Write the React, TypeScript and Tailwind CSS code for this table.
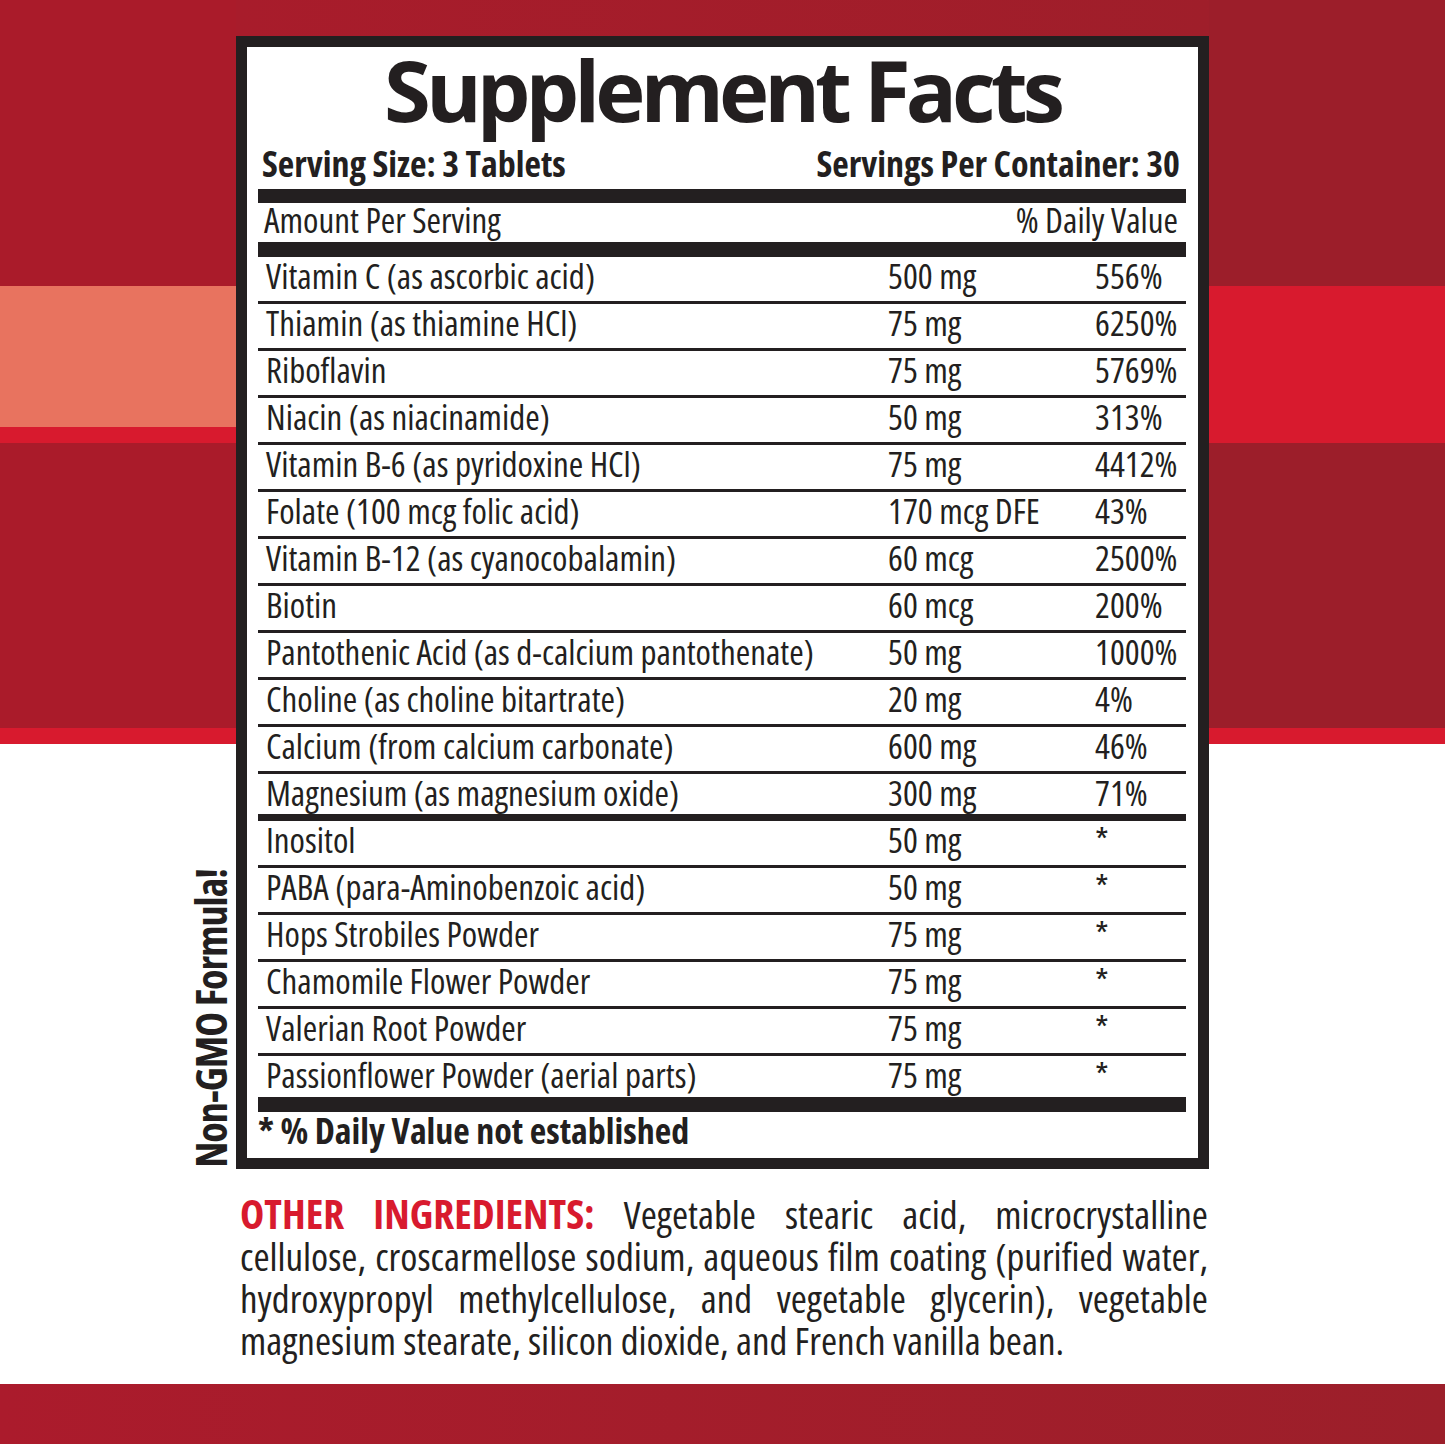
const ink = "text-[#231f20]";

const facts: [string, string, string][] = [
  ["Vitamin C (as ascorbic acid)", "500 mg", "556%"],
  ["Thiamin (as thiamine HCl)", "75 mg", "6250%"],
  ["Riboflavin", "75 mg", "5769%"],
  ["Niacin (as niacinamide)", "50 mg", "313%"],
  ["Vitamin B-6 (as pyridoxine HCl)", "75 mg", "4412%"],
  ["Folate (100 mcg folic acid)", "170 mcg DFE", "43%"],
  ["Vitamin B-12 (as cyanocobalamin)", "60 mcg", "2500%"],
  ["Biotin", "60 mcg", "200%"],
  ["Pantothenic Acid (as d-calcium pantothenate)", "50 mg", "1000%"],
  ["Choline (as choline bitartrate)", "20 mg", "4%"],
  ["Calcium (from calcium carbonate)", "600 mg", "46%"],
  ["Magnesium (as magnesium oxide)", "300 mg", "71%"],
  ["Inositol", "50 mg", "*"],
  ["PABA (para-Aminobenzoic acid)", "50 mg", "*"],
  ["Hops Strobiles Powder", "75 mg", "*"],
  ["Chamomile Flower Powder", "75 mg", "*"],
  ["Valerian Root Powder", "75 mg", "*"],
  ["Passionflower Powder (aerial parts)", "75 mg", "*"],
];

function FactRow({ row, index }: { row: [string, string, string]; index: number }) {
  const last = index === facts.length - 1;
  // the line under magnesium closes the daily-value block, so it is heavier
  const thick = index === 11;
  let rule = "pb-[7px] border-b-[3px]";
  if (thick) rule = "pb-[3px] border-b-[7px]";
  if (last) rule = "pb-[4px]";
  return (
    <div className={`grid grid-cols-[622px_207px_1fr] pl-[8px] leading-[37px] border-[#231f20] ${rule}`}>
      <span>{row[0]}</span>
      <span>{row[1]}</span>
      <span>{row[2]}</span>
    </div>
  );
}

function SideBands({ dark, light }: { dark: string; light: string }) {
  return (
    <div className="flex flex-col">
      <div className={`h-[286px] ${dark}`} />
      <div className={`h-[141px] ${light}`} />
      <div className="h-[16px] bg-[#d81a2e]" />
      <div className={`h-[285px] ${dark}`} />
      <div className="h-[16px] bg-[#d81a2e]" />
    </div>
  );
}

export default function App() {
  return (
    <div className={`w-[1445px] h-[1444px] flex flex-col bg-white font-['Open_Sans',sans-serif] ${ink}`}>
      <div className="flex h-[1384px]">
        {/* left strip */}
        <div className="w-[236px] flex flex-col">
          <SideBands dark="bg-[#aa1b2a]" light="bg-[#e8735f]" />
          <div className="flex-1 flex justify-end items-end pr-[4px] pb-[216px]">
            <div className="[writing-mode:vertical-rl] rotate-180 text-[42px] leading-[42px] tracking-[-1px] font-bold [font-stretch:condensed] whitespace-nowrap">
              Non-GMO Formula!
            </div>
          </div>
        </div>

        {/* label */}
        <div className="w-[973px] flex flex-col">
          <div className="h-[36px] bg-linear-to-r from-[#a81c2b] to-[#9f1e2a]" />
          <div className="border-[11px] border-[#231f20] bg-white pl-[11px] pr-[12px]">
            <h1 className="text-center text-[85px] leading-[85px] font-bold tracking-[-5px]">
              Supplement Facts
            </h1>
            <div className="mt-[20px] mb-[13px] flex justify-between pl-[4px] pr-[6px] text-[36px] leading-[24px] font-bold [font-stretch:condensed]">
              <span>Serving Size: 3 Tablets</span>
              <span>Servings Per Container: 30</span>
            </div>
            <div className="h-[14px] bg-[#231f20]" />
            <div className="flex justify-between pl-[6px] pr-[8px] pb-[6px] text-[35px] leading-[33px] [font-stretch:condensed]">
              <span>Amount Per Serving</span>
              <span>% Daily Value</span>
            </div>
            <div className="h-[15px] bg-[#231f20]" />
            <div className="text-[35px] [font-stretch:condensed]">
              {facts.map((row, i) => (
                <FactRow key={row[0]} row={row} index={i} />
              ))}
            </div>
            <div className="h-[15px] bg-[#231f20]" />
            <div className="pt-[4px] pb-[12px] text-[36px] leading-[30px] font-bold [font-stretch:condensed]">
              * % Daily Value not established
            </div>
          </div>

          <div className="mt-[23px] pl-[4px] pr-[1px] text-[39px] leading-[42px] [font-stretch:condensed]">
            <div className="text-justify [text-align-last:justify]">
              <span className="text-[41px] font-bold text-[#d81a2e]">OTHER INGREDIENTS:</span> Vegetable stearic acid, microcrystalline
            </div>
            <div className="text-justify [text-align-last:justify]">
              cellulose, croscarmellose sodium, aqueous film coating (purified water,
            </div>
            <div className="text-justify [text-align-last:justify]">
              hydroxypropyl methylcellulose, and vegetable glycerin), vegetable
            </div>
            <div>magnesium stearate, silicon dioxide, and French vanilla bean.</div>
          </div>
        </div>

        {/* right strip */}
        <div className="flex-1 flex flex-col">
          <SideBands dark="bg-[#9c1e2a]" light="bg-[#d81a2e]" />
        </div>
      </div>
      <div className="h-[60px] bg-linear-to-r from-[#ab1b2c] to-[#9c1f2a]" />
    </div>
  );
}
